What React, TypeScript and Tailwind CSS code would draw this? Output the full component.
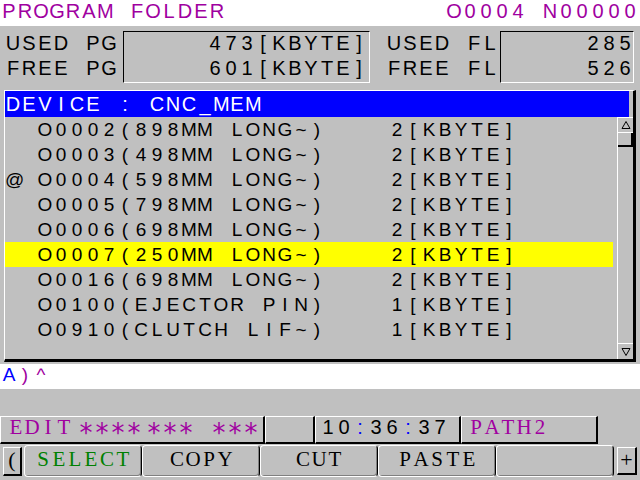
import React from 'react';

// one character per 16px cell, like the CNC bitmap font grid
function Cells({ s }: { s: string }) {
  return (
    <span className="inline-flex">
      {Array.from(s).map((c, i) => (
        <span key={i} className="w-[16px] shrink-0 text-center whitespace-pre">
          {c}
        </span>
      ))}
    </span>
  );
}

const programs = [
  { mark: ' ', no: 'O0002', name: '(898MM LONG~)', size: '2' },
  { mark: ' ', no: 'O0003', name: '(498MM LONG~)', size: '2' },
  { mark: '@', no: 'O0004', name: '(598MM LONG~)', size: '2' },
  { mark: ' ', no: 'O0005', name: '(798MM LONG~)', size: '2' },
  { mark: ' ', no: 'O0006', name: '(698MM LONG~)', size: '2' },
  { mark: ' ', no: 'O0007', name: '(250MM LONG~)', size: '2', active: true },
  { mark: ' ', no: 'O0016', name: '(698MM LONG~)', size: '2' },
  { mark: ' ', no: 'O0100', name: '(EJECTOR PIN)', size: '1' },
  { mark: ' ', no: 'O0910', name: '(CLUTCH LIF~)', size: '1' },
];

function SoftKey({ label, green }: { label: string; green?: boolean }) {
  return (
    <div
      className={`w-[118px] h-[32px] shrink-0 rounded-[4px] border border-white border-r-black shadow-[inset_-1px_-1px_0_#808080] flex justify-center font-['Liberation_Serif',serif] text-[21px] leading-[26px] ${
        green ? 'text-[#008000]' : 'text-black'
      }`}
    >
      <Cells s={label} />
    </div>
  );
}

function Stars({ n, gap }: { n: number; gap: string }) {
  return (
    <span className={`${gap} translate-y-[6px] font-['DejaVu_Sans',sans-serif] text-[26px] leading-[21px]`}>
      <Cells s={'*'.repeat(n)} />
    </span>
  );
}

export default function App() {
  return (
    <div className="w-[640px] h-[480px] bg-[#c0c0c0] overflow-hidden flex flex-col font-['Liberation_Sans',Arial,sans-serif] text-[19px] text-black">
      {/* title */}
      <div className="h-[26px] shrink-0 bg-white flex justify-between items-start pl-[1px] pr-[2px] text-[20px] leading-[23px] text-[#a000a0]">
        <Cells s="PROGRAM FOLDER" />
        <Cells s="O0004 N00000" />
      </div>

      {/* memory usage */}
      <div className="h-[64px] shrink-0 flex items-start pt-[5px] pl-[5px] text-[20px] leading-[23px]">
        <div className="w-[118px] pt-[1px] flex flex-col">
          <div className="h-[25px]">
            <Cells s="USED PG" />
          </div>
          <div className="h-[25px]">
            <Cells s="FREE PG" />
          </div>
        </div>
        <div className="w-[247px] h-[52px] border border-t-black border-l-black border-r-white border-b-white flex flex-col items-end pr-[2px]">
          <div className="h-[25px]">
            <Cells s="473[KBYTE]" />
          </div>
          <div className="h-[25px]">
            <Cells s="601[KBYTE]" />
          </div>
        </div>
        <div className="ml-[16px] w-[114px] pt-[1px] flex flex-col">
          <div className="h-[25px]">
            <Cells s="USED FL" />
          </div>
          <div className="h-[25px]">
            <Cells s="FREE FL" />
          </div>
        </div>
        <div className="w-[134px] h-[52px] border border-t-black border-l-black border-r-white border-b-white flex flex-col items-end">
          <div className="h-[25px]">
            <Cells s="285" />
          </div>
          <div className="h-[25px]">
            <Cells s="526" />
          </div>
        </div>
      </div>

      {/* program list */}
      <div className="ml-[4px] w-[632px] h-[272px] shrink-0 flex flex-col border-t border-l border-r-[3px] border-b-[3px] border-t-white border-l-white border-r-black border-b-black">
        <div className="h-[26px] shrink-0 mr-[4px] bg-[#0000ff] text-white text-[20px] leading-[26px]">
          <Cells s="DEVICE : CNC_MEM" />
        </div>
        <div className="flex flex-1">
          <div className="w-[612px] flex flex-col">
            {programs.map((p) => (
              <div
                key={p.no}
                className={`w-[608px] h-[25px] leading-[25px] ${p.active ? 'bg-[#ffff00]' : ''}`}
              >
                <Cells s={`${p.mark} ${p.no}${p.name}    ${p.size}[KBYTE]`} />
              </div>
            ))}
          </div>
          <div className="w-[16px] border-l border-white flex flex-col">
            <div className="h-[16px] border-t border-b border-white flex items-center justify-center">
              <svg width="10" height="8" viewBox="0 0 10 8">
                <polygon points="5,0.5 9,7.5 1,7.5" fill="none" stroke="#000" strokeWidth="1" />
              </svg>
            </div>
            <div className="h-[14px] border-r-2 border-b-2 border-black" />
            <div className="flex-1" />
            <div className="h-[16px] border-t border-white flex items-center justify-center">
              <svg width="10" height="8" viewBox="0 0 10 8">
                <polygon points="1,0.5 9,0.5 5,7.5" fill="none" stroke="#000" strokeWidth="1" />
              </svg>
            </div>
          </div>
        </div>
      </div>

      {/* key-in line */}
      <div className="mt-[2px] h-[25px] shrink-0 bg-white pl-[1px] leading-[22px]">
        <span className="text-[#0000ff]">
          <Cells s="A" />
        </span>
        <span className="text-[#a000a0]">
          <Cells s=")^" />
        </span>
      </div>

      <div className="h-[27px] shrink-0" />

      {/* status line */}
      <div className="h-[28px] shrink-0 flex">
        <div className="w-[265px] h-[28px] border-t border-l border-r-2 border-b-2 border-t-white border-l-white border-r-black border-b-black pl-[7px] flex items-start font-['Liberation_Serif',serif] text-[21px] leading-[21px] text-[#a000a0]">
          <Cells s="EDIT" />
          <Stars n={4} gap="ml-[6px]" />
          <Stars n={3} gap="ml-[4px]" />
          <Stars n={3} gap="ml-[17px]" />
        </div>
        <div className="w-[50px] h-[28px] border-t border-l border-r-2 border-b-2 border-t-white border-l-white border-r-black border-b-black" />
        <div className="w-[146px] h-[28px] border-t border-l border-r-2 border-b-2 border-t-white border-l-white border-r-black border-b-black pl-[4px] text-[20px] leading-[21px]">
          <Cells s="10" />
          <span className="text-[#0000ff]">
            <Cells s=":" />
          </span>
          <Cells s="36" />
          <span className="text-[#0000ff]">
            <Cells s=":" />
          </span>
          <Cells s="37" />
        </div>
        <div className="w-[137px] h-[28px] border-t border-l border-r-2 border-b-2 border-t-white border-l-white border-r-black border-b-black pl-[6px] font-['Liberation_Serif',serif] text-[21px] leading-[21px] text-[#a000a0]">
          <Cells s="PATH2" />
        </div>
      </div>

      {/* soft keys */}
      <div className="mt-[1px] h-[32px] shrink-0 flex items-start pl-[3px]">
        <div className="mt-[2px] w-[19px] h-[29px] border-t border-l border-r-2 border-b-2 border-t-white border-l-white border-r-black border-b-black flex justify-center font-['Liberation_Serif',serif] text-[22px] leading-[24px]">
          (
        </div>
        <div className="ml-[2px] flex">
          <SoftKey label="SELECT" green />
          <SoftKey label="COPY" />
          <SoftKey label="CUT" />
          <SoftKey label="PASTE" />
          <SoftKey label="" />
        </div>
        <div className="ml-[3px] mt-[2px] w-[20px] h-[28px] border-t border-l border-r-2 border-b-2 border-t-white border-l-white border-r-black border-b-black flex justify-center font-['Liberation_Serif',serif] text-[22px] leading-[24px]">
          +
        </div>
      </div>
    </div>
  );
}
